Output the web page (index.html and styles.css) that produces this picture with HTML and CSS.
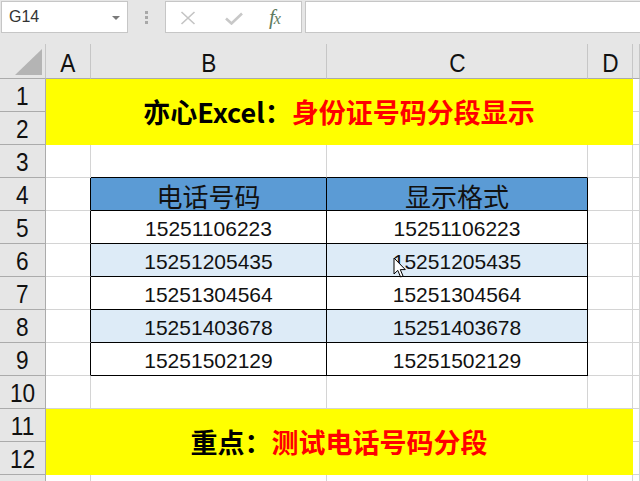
FILE: index.html
```html
<!DOCTYPE html>
<html lang="zh-CN">
<head>
  <meta charset="UTF-8">
  <title>身份证号码分段显示</title>
  <link rel="stylesheet" href="styles.css">
</head>
<body>
  <div class="toolbar">
    <div class="namebox"><span>G14</span><i class="drop"></i></div>
    <div class="grip"><i></i><i></i><i></i></div>
    <div class="fxbox">
      <svg class="ico-x" width="16" height="14" viewBox="0 0 16 14"><path d="M1.5 1 L14.5 13 M14.5 1 L1.5 13" stroke="#c4c4c4" stroke-width="1.6" fill="none"/></svg>
      <svg class="ico-ok" width="18" height="13" viewBox="0 0 18 13"><path d="M1 6.5 L6.5 11.5 L17 1.5" stroke="#c8c8c8" stroke-width="2.6" fill="none"/></svg>
      <span class="fx">f<small>x</small></span>
    </div>
    <div class="formula"></div>
  </div>

  <div class="sheet">
    <!-- column headers -->
    <div class="corner"><svg width="27" height="26" viewBox="0 0 27 26"><polygon points="27,0 27,26 0,26" fill="#b4b4b4"/></svg></div>
    <div class="col-head"><span>A</span></div>
    <div class="col-head"><span>B</span></div>
    <div class="col-head"><span>C</span></div>
    <div class="col-head"><span>D</span></div>
    <div class="col-head"></div>

    <!-- 1-2 -->
    <div class="row-head"><span>1</span></div>
    <div class="banner">亦心Excel：<em>身份证号码分段显示</em></div>
    <div></div>
    <div class="row-head"><span>2</span></div>
    <div></div>

    <!-- 3 -->
    <div class="row-head"><span>3</span></div>
    <div></div><div class="tt"></div><div class="tt"></div><div></div><div></div>

    <!-- 4 -->
    <div class="row-head"><span>4</span></div>
    <div class="tl"></div>
    <div class="t th">电话号码</div>
    <div class="t th">显示格式</div>
    <div></div><div></div>

    <div class="row-head"><span>5</span></div>
    <div class="tl"></div>
    <div class="t td">15251106223</div>
    <div class="t td">15251106223</div>
    <div></div><div></div>

    <div class="row-head"><span>6</span></div>
    <div class="tl"></div>
    <div class="t td alt">15251205435</div>
    <div class="t td alt">15251205435</div>
    <div></div><div></div>

    <div class="row-head"><span>7</span></div>
    <div class="tl"></div>
    <div class="t td">15251304564</div>
    <div class="t td">15251304564</div>
    <div></div><div></div>

    <div class="row-head"><span>8</span></div>
    <div class="tl"></div>
    <div class="t td alt">15251403678</div>
    <div class="t td alt">15251403678</div>
    <div></div><div></div>

    <div class="row-head"><span>9</span></div>
    <div class="tl"></div>
    <div class="t td">15251502129</div>
    <div class="t td">15251502129</div>
    <div></div><div></div>

    <!-- 10 -->
    <div class="row-head"><span>10</span></div>
    <div></div><div></div><div></div><div></div><div></div>

    <!-- 11-12 -->
    <div class="row-head"><span>11</span></div>
    <div class="banner">重点：<em>测试电话号码分段</em></div>
    <div></div>
    <div class="row-head"><span>12</span></div>
    <div></div>

    <!-- 13, only its top edge shows -->
    <div class="row-head"></div>
    <div></div><div></div><div></div><div></div><div></div>
  </div>

  <svg class="cursor" width="14" height="22" viewBox="0 0 14 22"><path d="M1 1 L1 17 L4.8 13.4 L7.6 20 L10 19 L7.3 12.6 L12.3 12.6 Z" fill="#fff" stroke="#000" stroke-width="1"/></svg>
</body>
</html>
```

FILE: styles.css
```css
* { box-sizing: border-box; }
html, body {
  margin: 0;
  padding: 0;
  width: 640px;
  height: 481px;
  overflow: hidden;
  background: #fff;
  font-family: "Liberation Sans", Arial, sans-serif;
}

/* formula bar */
.toolbar {
  display: flex;
  align-items: flex-start;
  height: 44px;
  padding-top: 1px;
  background: #e6e6e6;
}

.namebox {
  position: relative;
  margin-left: 1px;
  width: 127px;
  height: 32px;
  border: 1px solid #c6c6c6;
  background: #fff;
  padding-left: 7px;
  font-size: 16px;
  line-height: 29px;
  color: #333;
}

.namebox .drop {
  position: absolute;
  right: 7px;
  top: 14px;
  border-left: 4px solid transparent;
  border-right: 4px solid transparent;
  border-top: 4px solid #7a7a7a;
}

.grip {
  width: 37px;
  height: 32px;
  display: flex;
  flex-direction: column;
  align-items: center;
  justify-content: center;
  gap: 2px;
}

.grip i {
  display: block;
  width: 3px;
  height: 3px;
  background: #a8a8a8;
}

.fxbox {
  display: flex;
  align-items: center;
  width: 137px;
  height: 32px;
  border: 1px solid #c6c6c6;
  background: #fff;
  padding-left: 14px;
}

.ico-x { margin-top: 1px; }
.ico-ok { margin-left: 29px; margin-top: 2px; }

.fx {
  margin-left: 26px;
  font-family: "Liberation Serif", serif;
  font-style: italic;
  font-size: 21px;
  color: #607c60;
  letter-spacing: -1px;
}
.fx small { font-size: 16px; }

.formula {
  flex: 1;
  margin-left: 3px;
  height: 32px;
  border: 1px solid #c6c6c6;
  border-right: none;
  background: #fff;
}

/* grid */
.sheet {
  display: grid;
  grid-template-columns: 46px 45px 236px 261px 45px 1fr;
  grid-template-rows: 35px repeat(12, 33px) 7px;
}

.sheet > div {
  display: flex;
  align-items: center;
  justify-content: center;
  border-right: 1px solid #d4d4d4;
  border-bottom: 1px solid #d4d4d4;
  background: #fff;
}

.corner {
  background: #e6e6e6 !important;
  border-right-color: #c6c6c6 !important;
  border-bottom-color: #ababab !important;
  align-items: flex-end !important;
  justify-content: flex-end !important;
  padding: 0 3px 3px 0;
}

.corner svg { display: block; }

.col-head, .row-head {
  background: #e6e6e6 !important;
  font-size: 26px;
  color: #111;
}

.col-head {
  border-right-color: #c6c6c6 !important;
  border-bottom-color: #ababab !important;
  padding-top: 4px;
}

.row-head {
  border-right-color: #ababab !important;
  border-bottom-color: #ababab !important;
  padding-top: 2px;
}

.col-head span, .row-head span {
  display: inline-block;
  transform: scaleX(0.87);
}

.banner {
  grid-column: span 4;
  grid-row: span 2;
  background: #ffff00 !important;
  border-color: #ffff00 !important;
  font-family: "Noto Sans CJK SC", sans-serif;
  font-weight: bold;
  font-size: 27px;
  color: #000;
}

.banner em {
  font-style: normal;
  color: #ff0000;
}

/* table B4:C9 */
.tt { border-bottom-color: #000 !important; }
.tl { border-right-color: #000 !important; }
.t {
  border-right-color: #000 !important;
  border-bottom-color: #000 !important;
}

.th {
  background: #5b9bd5 !important;
  font-family: "Noto Sans CJK SC", sans-serif;
  font-size: 26px;
  color: #111;
  padding-top: 3px;
}

.td {
  font-size: 21px;
  color: #111;
  padding-top: 3px;
}

.alt { background: #ddebf7 !important; }

.cursor {
  position: absolute;
  left: 393px;
  top: 257px;
}
```
